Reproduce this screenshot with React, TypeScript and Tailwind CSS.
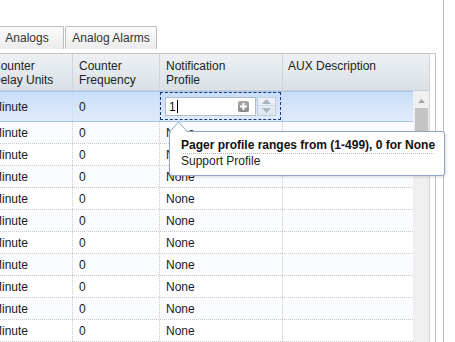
import React from "react";

const COLS = [
  { w: "w-[93px]", pl: "pl-[12px]" },
  { w: "w-[87px]", pl: "pl-[6px]" },
  { w: "w-[123px]", pl: "pl-[6px]" },
  { w: "w-[130px]", pl: "pl-[5px]" },
];

function HeaderCell({ className, children }: { className: string; children: React.ReactNode }) {
  return <div className={`h-full pt-[5px] leading-[14px] ${className}`}>{children}</div>;
}

export default function App() {
  const rows = Array.from({ length: 10 }, (_, i) => i);
  return (
    <div className="w-[455px] h-[342px] overflow-hidden bg-white relative font-['Liberation_Sans',Arial,sans-serif] text-[12px] text-[#1a1a1a]">
      <div className="ml-[-20px] w-[464px] h-[342px] border-r border-[#bfbfbf] pt-[26px] flex flex-col">
        {/* tab strip */}
        <div className="flex h-[23px] pl-[10px] gap-[1px] shrink-0">
          <div className="w-[74px] h-full border border-b-0 border-[#bdbdbd] rounded-t-[2px] bg-gradient-to-b from-[#fbfbfb] to-[#ececec] flex items-center justify-center text-[#333]">
            Analogs
          </div>
          <div className="w-[92px] h-full border border-b-0 border-[#bdbdbd] rounded-t-[2px] bg-gradient-to-b from-[#fbfbfb] to-[#ececec] flex items-center justify-center text-[#333]">
            Analog Alarms
          </div>
        </div>
        <div className="h-[4px] shrink-0" />
        {/* body */}
        <div className="w-[456px] flex-1 border-t border-r border-[#c4c4c4] pr-[5px] flex flex-col">
          <div className="w-[450px] flex-1 border-r border-[#d6d6d6] flex flex-col">
            {/* header */}
            <div className="flex h-[37px] shrink-0 border-b border-[#c9d1d8] bg-gradient-to-b from-[#edf1f4] to-[#d9e0e6] text-[#222]">
              <HeaderCell className={`${COLS[0].w} ${COLS[0].pl} border-r border-[#cdd4da]`}>
                <div className="whitespace-nowrap">Counter</div>
                <div className="whitespace-nowrap">Delay Units</div>
              </HeaderCell>
              <HeaderCell className={`${COLS[1].w} ${COLS[1].pl} border-r border-[#cdd4da]`}>
                <div>Counter</div>
                <div>Frequency</div>
              </HeaderCell>
              <HeaderCell className={`${COLS[2].w} ${COLS[2].pl} border-r border-[#cdd4da]`}>
                <div>Notification</div>
                <div>Profile</div>
              </HeaderCell>
              <HeaderCell className={`flex-1 ${COLS[3].pl}`}>
                <div>AUX Description</div>
              </HeaderCell>
            </div>
            {/* body rows + scrollbar */}
            <div className="flex flex-1">
              <div className="w-[433px] flex flex-col">
                {/* selected row */}
                <div className="flex h-[31px] border-t border-b border-[#a9c4ea] bg-gradient-to-b from-[#c9ddf8] to-[#e0ecfc]">
                  <div className={`${COLS[0].w} ${COLS[0].pl} border-r border-dotted border-[#c8d6ea] flex items-center`}>Minute</div>
                  <div className={`${COLS[1].w} ${COLS[1].pl} border-r border-dotted border-[#c8d6ea] flex items-center`}>0</div>
                  <div className={`${COLS[2].w} pr-[1px] border-r border-dotted border-[#c8d6ea] flex items-start`}>
                    <div className="w-[122px] h-[28px] border border-dashed border-[#1d3a78] flex items-center pl-[4px] pt-[1px]">
                      <div className="w-[91px] h-[19px] border border-[#b3bcc9] bg-white flex items-center justify-between pl-[3px] pr-[6px]">
                        <div className="flex items-center text-[#111]">
                          1<span className="ml-[1px] w-[1px] h-[13px] bg-black" />
                        </div>
                        <div className="w-[11px] h-[11px] rounded-[2px] bg-gradient-to-b from-[#ababab] to-[#888888] flex items-center justify-center">
                          <svg width="7" height="7" viewBox="0 0 7 7">
                            <rect x="2.5" y="0" width="2" height="7" fill="#fff" />
                            <rect x="0" y="2.5" width="7" height="2" fill="#fff" />
                          </svg>
                        </div>
                      </div>
                      <div className="w-[19px] h-[19px] ml-[1px] border border-[#c5d0dc] bg-gradient-to-b from-[#eef3f8] to-[#dde6ef] flex flex-col">
                        <div className="h-[8px] flex items-center justify-center border-b border-[#cdd7e2]">
                          <svg width="9" height="5" viewBox="0 0 9 5"><path d="M0 5 L4.5 0 L9 5Z" fill="#a9b5c2" /></svg>
                        </div>
                        <div className="flex-1 flex items-center justify-center">
                          <svg width="9" height="5" viewBox="0 0 9 5"><path d="M0 0 L4.5 5 L9 0Z" fill="#a9b5c2" /></svg>
                        </div>
                      </div>
                    </div>
                  </div>
                  <div className="flex-1" />
                </div>
                {rows.map((i) => (
                  <div
                    key={i}
                    className={`flex h-[22px] shrink-0 border-b border-dotted border-[#c9c9c9] ${i % 2 === 0 ? "bg-[#fafcff]" : "bg-white"}`}
                  >
                    <div className={`${COLS[0].w} ${COLS[0].pl} border-r border-dotted border-[#c9c9c9] flex items-center`}>Minute</div>
                    <div className={`${COLS[1].w} ${COLS[1].pl} border-r border-dotted border-[#c9c9c9] flex items-center`}>0</div>
                    <div className={`${COLS[2].w} ${COLS[2].pl} border-r border-dotted border-[#c9c9c9] flex items-center`}>None</div>
                    <div className="flex-1" />
                  </div>
                ))}
              </div>
              {/* scrollbar */}
              <div className="w-[16px] bg-[#efefef] flex flex-col items-center">
                <div className="h-[17px] flex items-center justify-center pt-[2px]">
                  <svg width="7" height="4" viewBox="0 0 7 4"><path d="M0 4 L3.5 0 L7 4Z" fill="#a6a6a6" /></svg>
                </div>
                <div className="w-[13px] h-[42px] bg-[#c4c4c4]" />
              </div>
            </div>
          </div>
        </div>
      </div>

      {/* tooltip */}
      <div className="absolute left-[169px] top-[131px] w-[276px] h-[45px] border border-[#8ea6c6] rounded-[3px] bg-white shadow-[1px_1px_3px_rgba(0,0,0,0.15)] pl-[11px] pr-[10px] pt-[6px]">
        <div className="font-bold h-[16px] leading-[15px] border-b border-dotted border-[#b8b8b8] whitespace-nowrap text-[#111]">
          Pager profile ranges from (1-499), 0 for None
        </div>
        <div className="leading-[14px] text-[#222]">Support Profile</div>
      </div>
      <svg className="absolute left-[169px] top-[121px]" width="19" height="11" viewBox="0 0 19 11">
        <path d="M0.5 11 L9.5 1 L18.5 11" fill="#fff" stroke="#8ea6c6" strokeWidth="1" />
      </svg>
    </div>
  );
}
